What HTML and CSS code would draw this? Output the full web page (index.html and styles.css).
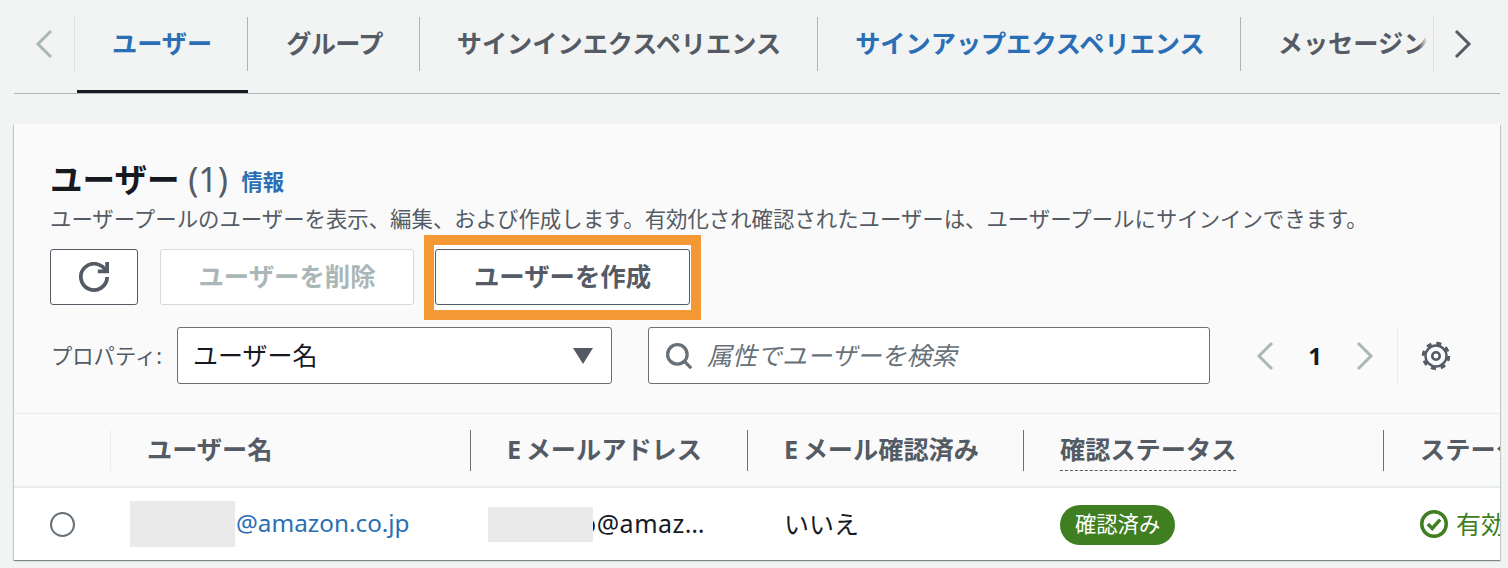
FILE: index.html
```html
<!DOCTYPE html>
<html lang="ja">
<head>
    <meta charset="UTF-8">
    <meta name="viewport" content="width=device-width, initial-scale=1.0">
    <title>ユーザー</title>
    <link rel="stylesheet" href="styles.css">
</head>
<body>
    <nav class="tabs">
        <button class="tab-arrow tab-arrow-left" aria-label="前へ">
            <svg viewBox="0 0 18 30" class="chevron"><path d="M16 2 3 15l13 13"/></svg>
        </button>
        <div class="tab-list">
            <a class="tab tab-active">ユーザー</a>
            <a class="tab">グループ</a>
            <a class="tab">サインインエクスペリエンス</a>
            <a class="tab tab-blue">サインアップエクスペリエンス</a>
            <a class="tab">メッセージング</a>
        </div>
        <button class="tab-arrow tab-arrow-right" aria-label="次へ">
            <svg viewBox="0 0 18 30" class="chevron"><path d="m2 2 13 13L2 28"/></svg>
        </button>
    </nav>

    <section class="card">
        <header class="card-head">
            <h1 class="title">ユーザー <span class="count">(1)</span> <a class="info">情報</a></h1>
            <p class="desc">ユーザープールのユーザーを表示、編集、および作成します。有効化され確認されたユーザーは、ユーザープールにサインインできます。</p>
            <div class="actions">
                <button class="btn btn-icon" aria-label="更新">
                    <svg viewBox="0 0 16 16" class="icon"><path d="M10 5h5V0"/><path d="M15 8a7 7 0 1 1-.5-2.67"/></svg>
                </button>
                <button class="btn btn-disabled">ユーザーを削除</button>
                <div class="highlight"><button class="btn btn-create">ユーザーを作成</button></div>
            </div>
            <div class="filters">
                <label class="filter-label">プロパティ:</label>
                <div class="select">
                    <span>ユーザー名</span>
                    <span class="caret"></span>
                </div>
                <div class="search">
                    <svg viewBox="0 0 16 16" class="icon search-icon"><circle cx="7" cy="7" r="6"/><path d="m11.2 11.2 4.3 4.3"/></svg>
                    <input class="search-input" type="text" placeholder="属性でユーザーを検索">
                </div>
                <div class="pager">
                    <svg viewBox="0 0 18 30" class="chevron chevron-small"><path d="M16 2 3 15l13 13"/></svg>
                    <span class="page-num">1</span>
                    <svg viewBox="0 0 18 30" class="chevron chevron-small"><path d="m2 2 13 13L2 28"/></svg>
                </div>
                <div class="settings">
                    <svg viewBox="0 0 16 16" class="icon gear">
                        <circle cx="8" cy="8" r="5.6" stroke-width="1.3"/>
                        <circle cx="8" cy="8" r="6.8" stroke-width="1.6" stroke-dasharray="2.67 2.67"/>
                        <circle cx="8" cy="8" r="2" stroke-width="1.4"/>
                    </svg>
                </div>
            </div>
        </header>

        <div class="table">
            <div class="row row-head">
                <div class="cell cell-radio"></div>
                <div class="cell"><span class="th-sep th-sep-light"></span>ユーザー名</div>
                <div class="cell cell-tight"><span class="th-sep"></span>E メールアドレス</div>
                <div class="cell cell-tight"><span class="th-sep"></span>E メール確認済み</div>
                <div class="cell"><span class="th-sep"></span><span class="dotted">確認ステータス</span></div>
                <div class="cell"><span class="th-sep"></span>ステータス</div>
            </div>
            <div class="row row-body">
                <div class="cell cell-radio"><input class="radio" type="radio" name="user"></div>
                <div class="cell cell-user"><span class="redact redact-tall"></span><a class="cell-text user-link">@amazon.co.jp</a></div>
                <div class="cell cell-mail"><span class="redact redact-short"></span><span class="cell-text mail-text">o@amaz…</span></div>
                <div class="cell"><span class="cell-text">いいえ</span></div>
                <div class="cell"><span class="badge">確認済み</span></div>
                <div class="cell cell-status">
                    <svg viewBox="0 0 16 16" class="icon status-icon"><circle cx="8" cy="8" r="7"/><path d="m4.5 8 2.5 2.5 4.5-5"/></svg>
                    <span class="cell-text">有効</span>
                </div>
            </div>
        </div>
    </section>
</body>
</html>
```

FILE: styles.css
```css
* {
    box-sizing: border-box;
}
html, body {
    height: 568px;
    overflow: hidden;
}
body {
    margin: 0;
    padding: 0 8px 0 14px;
    background-color: #f2f3f3;
    color: #16191f;
    font-family: "Noto Sans", "Noto Sans CJK JP", sans-serif;
    font-size: 25px;
}
button {
    font-family: inherit;
}
svg {
    fill: none;
    stroke: currentColor;
}
.icon {
    stroke-width: 2;
    display: block;
}

/* tabs */
.tabs {
    display: flex;
    height: 94px;
    border-bottom: 1px solid #aab7b8;
}
.tab-arrow {
    flex: none;
    height: 56px;
    margin-top: 16px;
    background: none;
    border: none;
    padding: 0;
    display: flex;
    align-items: center;
    justify-content: center;
}
.tab-arrow-left {
    width: 61px;
    padding-right: 1px;
    border-right: 1px solid #dfe3e4;
    color: #aab7b8;
}
.tab-arrow-right {
    width: 67px;
    padding-right: 8px;
    border-left: 1px solid #dfe3e4;
    color: #545b64;
}
.chevron {
    width: 18px;
    height: 30px;
    stroke-width: 3;
}
.tab-list {
    flex: 1;
    min-width: 0;
    display: flex;
    overflow: hidden;
    position: relative;
}
.tab-list::after {
    content: "";
    position: absolute;
    right: 0;
    top: 0;
    width: 14px;
    height: 90px;
    background: linear-gradient(90deg, rgba(242, 243, 243, 0), #f2f3f3 60%);
}
.tab {
    flex: none;
    position: relative;
    height: 93px;
    font-size: 25.2px;
    font-weight: 700;
    line-height: 54px;
    color: #545b64;
    padding: 16px 36px 0 37px;
}
.tab::before {
    content: "";
    position: absolute;
    right: 0;
    top: 17px;
    height: 54px;
    width: 1px;
    background-color: #aab7b8;
}
.tab:last-child::before {
    display: none;
}
.tab:nth-child(2) {
    padding: 16px 37px 0 38px;
    letter-spacing: -0.7px;
}
.tab:nth-child(3) {
    padding-right: 37px;
}
.tab:nth-child(5) {
    padding-right: 0;
}
.tab-active {
    color: #2a6fb5;
}
.tab-active::after {
    content: "";
    position: absolute;
    left: 2px;
    right: 0;
    bottom: 0;
    height: 3px;
    background-color: #16191f;
}
.tab-blue {
    color: #2a6fb5;
}

/* card */
.card {
    margin-top: 30px;
    height: 436px;
    background-color: #fafafa;
    box-shadow: 0 1px 1px 0 rgba(0, 28, 36, 0.3), 1px 1px 1px 0 rgba(0, 28, 36, 0.15), -1px 1px 1px 0 rgba(0, 28, 36, 0.15);
    overflow: hidden;
}
.card-head {
    padding: 35px 36px 0 36px;
    height: 290px;
    border-bottom: 1px solid #eaeded;
}
.title {
    margin: 0;
    font-size: 32.6px;
    font-weight: 700;
    line-height: 40px;
}
.count {
    font-size: 34px;
    font-weight: 400;
    color: #545b64;
}
.info {
    font-size: 21.3px;
    color: #2a6fb5;
    margin-left: 5px;
    vertical-align: 2px;
}
.desc {
    margin: 1px 0 0 0;
    font-size: 21.4px;
    line-height: 32px;
    color: #545b64;
    white-space: nowrap;
}
.actions {
    display: flex;
    margin-top: 14px;
}
.btn {
    height: 56px;
    border: 1px solid #545b64;
    border-radius: 3px;
    background-color: #fff;
    font-size: 25.4px;
    font-weight: 700;
    color: #545b64;
    padding: 0 0 5px 0;
}
.btn-icon {
    width: 88px;
    padding: 0;
    display: flex;
    align-items: center;
    justify-content: center;
}
.btn-icon .icon {
    width: 30px;
    height: 30px;
}
.btn-disabled {
    width: 254px;
    margin-left: 22px;
    border-color: #d5dbdb;
    color: #aab7b8;
}
.highlight {
    position: relative;
    z-index: 0;
    margin-left: 21px;
    height: 56px;
}
.highlight::before {
    content: "";
    position: absolute;
    z-index: -1;
    top: -14px;
    bottom: -15px;
    left: -11px;
    right: -11px;
    background-color: #fff;
    border: 10px solid #f39835;
}
.btn-create {
    width: 255px;
}

/* filter row */
.filters {
    display: flex;
    align-items: center;
    margin-top: 22px;
    height: 57px;
}
.filter-label {
    width: 127px;
    padding: 0 0 3px 1px;
    font-size: 21.3px;
    color: #545b64;
    white-space: nowrap;
}
.select {
    width: 435px;
    height: 57px;
    display: flex;
    align-items: center;
    justify-content: space-between;
    padding: 0 18px 3px 15px;
    background-color: #fff;
    border: 1px solid #687078;
    border-radius: 3px;
}
.caret {
    width: 0;
    height: 0;
    margin-top: 3px;
    border-left: 10px solid transparent;
    border-right: 10px solid transparent;
    border-top: 16px solid #545b64;
}
.search {
    width: 562px;
    height: 57px;
    margin-left: 36px;
    display: flex;
    align-items: center;
    padding-left: 17px;
    background-color: #fff;
    border: 1px solid #687078;
    border-radius: 3px;
}
.search-icon {
    width: 26px;
    height: 26px;
    color: #687078;
    flex: none;
}
.search-input {
    flex: 1;
    min-width: 0;
    margin: 0 0 2px 15px;
    border: none;
    outline: none;
    background: none;
    padding: 0;
    font-family: inherit;
    font-size: 25px;
    font-style: italic;
}
.search-input::placeholder {
    color: #687078;
    opacity: 1;
}
.pager {
    display: flex;
    align-items: center;
    margin-left: 46px;
    color: #aab7b8;
}
.page-num {
    width: 82px;
    text-align: center;
    font-size: 24px;
    font-weight: 700;
    color: #16191f;
}
.settings {
    height: 56px;
    margin-left: 23px;
    padding-left: 23px;
    border-left: 1px solid #eaeded;
    display: flex;
    align-items: center;
    color: #545b64;
}
.gear {
    width: 30px;
    height: 30px;
}

/* table */
.row {
    display: grid;
    grid-template-columns: 96px 360px 277px 276px 360px 360px;
    white-space: nowrap;
}
.row-head {
    height: 74px;
    border-bottom: 2px solid #eaeded;
    font-weight: 700;
    color: #545b64;
    font-size: 25.2px;
}
.row-head .cell {
    position: relative;
    padding: 0 0 5px 37px;
    display: flex;
    align-items: center;
}
.row-head .cell-radio {
    padding: 0;
}
.row-head .cell-tight {
    word-spacing: -2px;
}
.th-sep {
    position: absolute;
    left: 0;
    top: 16px;
    height: 41px;
    width: 1px;
    background-color: #687078;
}
.th-sep-light {
    background-color: #eaeded;
}
.dotted {
    display: inline-block;
    margin-top: 5px;
    padding-bottom: 1px;
    border-bottom: 1px dashed #545b64;
    line-height: 40px;
}
.row-body {
    height: 72px;
    align-items: center;
    background-color: #fff;
}
.row-body .cell {
    padding-left: 37px;
    display: flex;
    align-items: center;
}
.row-body .cell-radio {
    padding-left: 36px;
}
.cell-text {
    padding-bottom: 3px;
}
.radio {
    appearance: none;
    width: 25px;
    height: 25px;
    margin: 0;
    border: 2px solid #687078;
    border-radius: 50%;
    background-color: #fff;
}
.row-body .cell-user {
    padding-left: 20px;
}
.row-body .cell-mail {
    padding-left: 18px;
}
.redact {
    display: block;
    flex: none;
    width: 105px;
    background-color: #eaeaea;
}
.redact-tall {
    height: 46px;
    margin-right: 1px;
}
.redact-short {
    position: relative;
    height: 35px;
    margin-right: -12px;
}
.user-link {
    color: #2a6fb5;
    font-size: 24.3px;
}
.mail-text {
    color: #16191f;
    letter-spacing: 0.5px;
}
.badge {
    display: inline-block;
    height: 40px;
    margin-top: 2px;
    padding: 0 15px;
    border-radius: 20px;
    background-color: #3f7f22;
    color: #fff;
    font-size: 21.3px;
    line-height: 38px;
}
.cell-status {
    color: #3f7f22;
}
.status-icon {
    width: 28px;
    height: 28px;
    margin-right: 8px;
    flex: none;
}
```
